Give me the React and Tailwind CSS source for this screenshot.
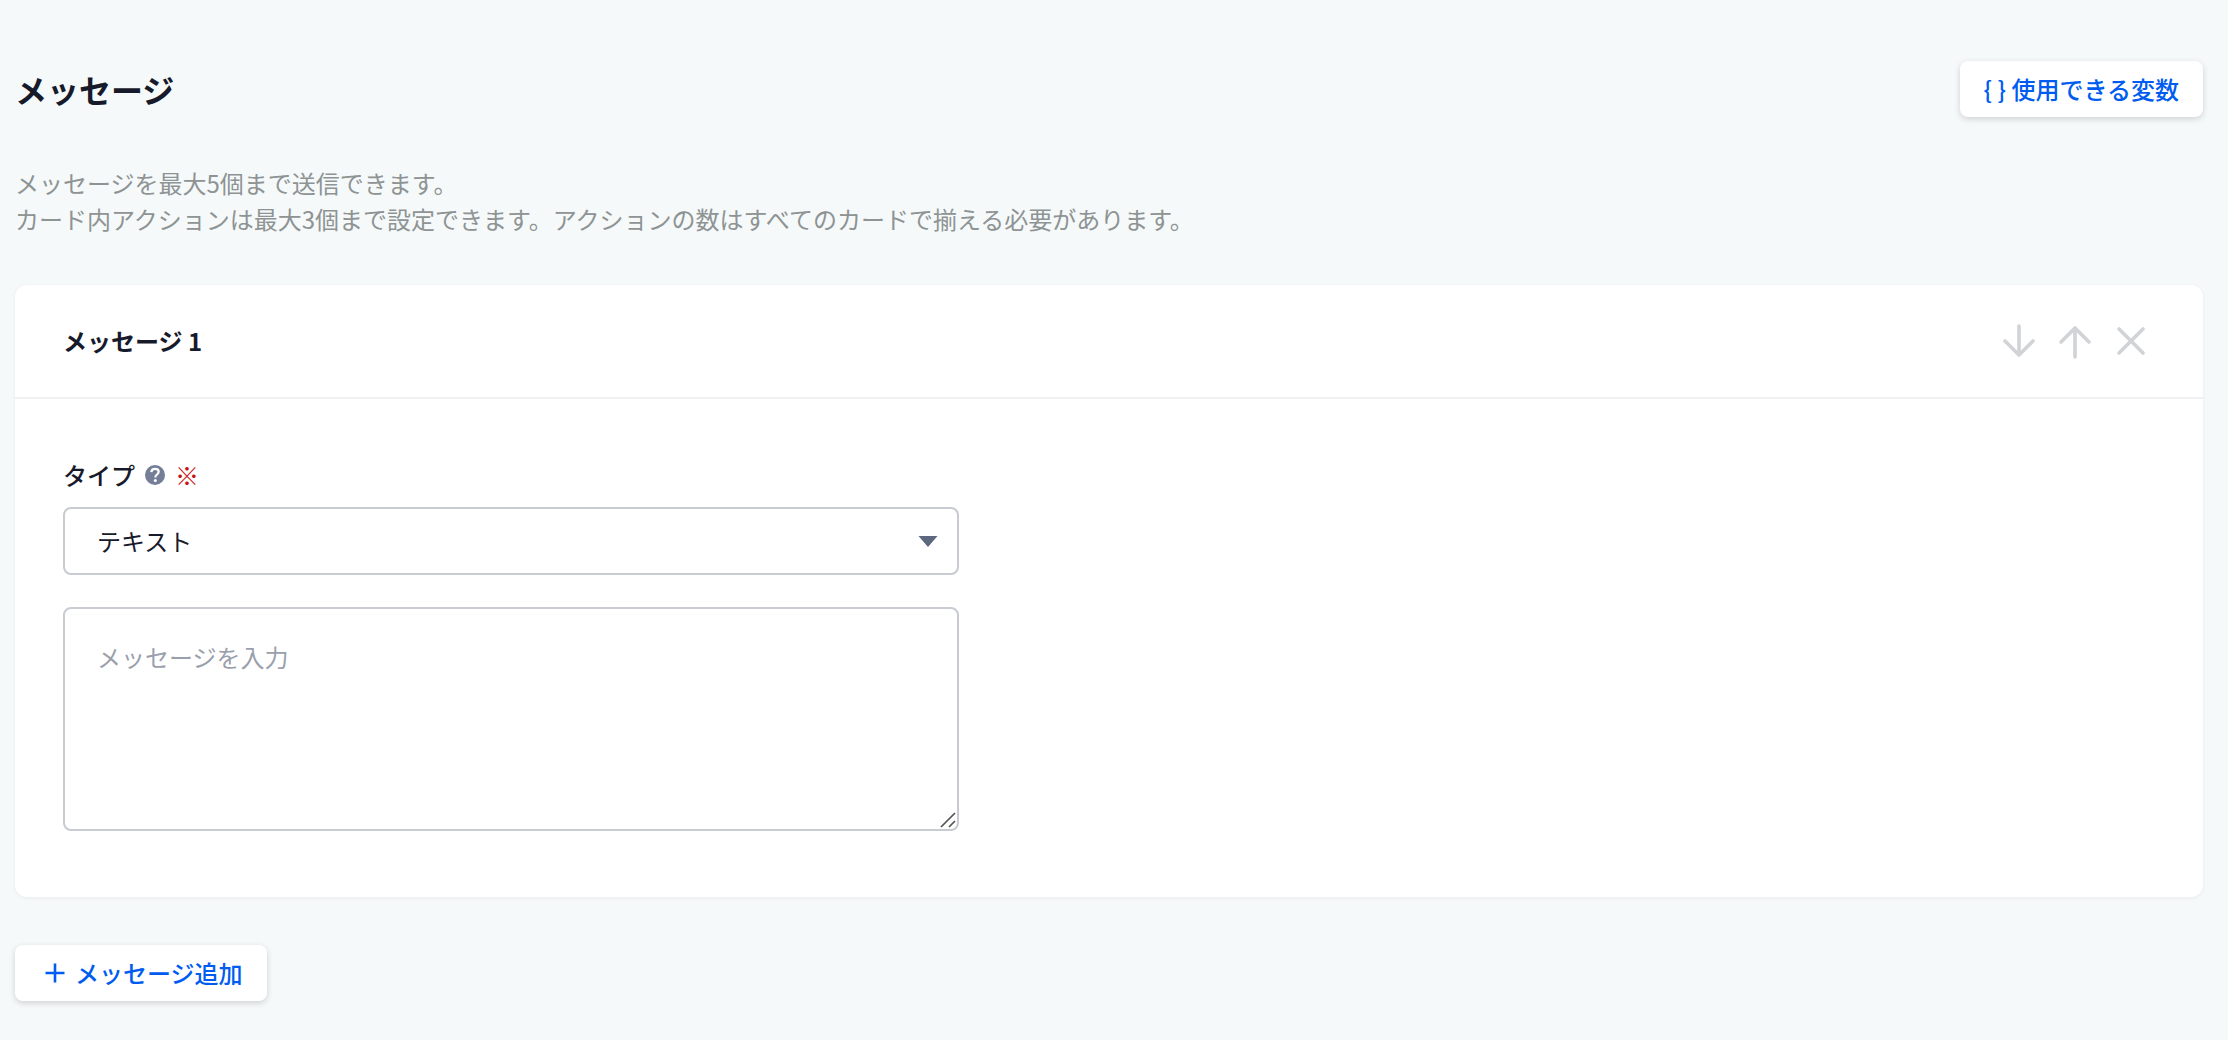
import React, { useState } from "react";

const iconPaths = {
  down: "M16 1v29M2 16l14 14 14-14",
  up: "M16 32V3M2 17L16 3l14 14",
  close: "M4 4l24 24M28 4L4 28",
};

function IconButton({ label, path }) {
  return (
    <button
      type="button"
      aria-label={label}
      className="p-1 text-[#d1d3d6] hover:text-gray-400 transition"
    >
      <svg
        viewBox="0 0 32 32"
        className="size-8 overflow-visible"
        fill="none"
        stroke="currentColor"
        strokeWidth="3.6"
        strokeLinecap="round"
        strokeLinejoin="round"
      >
        <path d={path} />
      </svg>
    </button>
  );
}

function App() {
  const [type, setType] = useState("text");
  const [message, setMessage] = useState("");

  return (
    <div className="min-h-screen bg-[#f5f9fa] pt-[61px] pr-[25px] pb-[39px] pl-[15px] font-['Noto_Sans_CJK_JP',sans-serif] text-2xl leading-9 text-[#171a2b]">
      {/* Header */}
      <div className="flex items-center justify-between">
        <h1 className="text-[32px] leading-12 font-bold">メッセージ</h1>
        <button
          type="button"
          className="h-14 px-6 bg-white rounded-lg shadow-[0_2px_6px_rgba(0,0,0,0.16)] font-medium text-[#005cf0]"
        >
          {"{ } 使用できる変数"}
        </button>
      </div>

      <p className="mt-12 text-[#8e9393]">
        メッセージを最大5個まで送信できます。
        <br />
        カード内アクションは最大3個まで設定できます。アクションの数はすべてのカードで揃える必要があります。
      </p>

      {/* Message card */}
      <section className="mt-12 bg-white rounded-xl shadow-[0_1px_4px_rgba(0,0,0,0.06)]">
        <div className="flex items-center justify-between pl-12 pr-[52px] py-9 border-b-2 border-[#f0f1f3]">
          <h2 className="font-bold">メッセージ 1</h2>
          <div className="flex items-center gap-4">
            <IconButton label="下へ移動" path={iconPaths.down} />
            <IconButton label="上へ移動" path={iconPaths.up} />
            <IconButton label="削除" path={iconPaths.close} />
          </div>
        </div>

        <div className="px-12 pt-[58px] pb-[66px]">
          <div className="flex items-center mb-3.5">
            <label htmlFor="type" className="font-medium">
              タイプ
            </label>
            <svg viewBox="0 0 20 20" className="ml-2.5 size-5" fill="none">
              <circle cx="10" cy="10" r="10" fill="#747e96" />
              <path
                d="M6.3 7.2C6.5 5 8 3.8 10.1 3.8c2.1 0 3.6 1.2 3.6 3 0 2.7-3.4 2.7-3.4 5.6"
                stroke="#fff"
                strokeWidth="2.2"
              />
              <circle cx="10.3" cy="15.6" r="1.5" fill="#fff" />
            </svg>
            <span className="ml-2.5 text-[#c81414]">※</span>
          </div>

          <div className="relative max-w-4xl">
            <select
              id="type"
              value={type}
              onChange={(e) => setType(e.target.value)}
              className="block w-full h-17 px-8 appearance-none bg-white border-2 border-[#c9cbd3] rounded-lg"
            >
              <option value="text">テキスト</option>
            </select>
            <svg
              viewBox="0 0 20 11"
              className="absolute right-[21px] top-[29px] w-5 h-[11px] pointer-events-none"
            >
              <path d="M0.5 0h19L10 11z" fill="#5d6780" />
            </svg>
          </div>

          <div className="relative max-w-4xl mt-8">
            <textarea
              aria-label="メッセージ"
              value={message}
              onChange={(e) => setMessage(e.target.value)}
              placeholder="メッセージを入力"
              className="block w-full h-56 px-8 py-[30px] resize-none bg-white border-2 border-[#c9cbd3] rounded-lg placeholder:text-[#9a9fac]"
            />
            <svg
              viewBox="0 0 16 16"
              className="absolute right-[3px] bottom-[3px] size-4 pointer-events-none"
              fill="none"
              stroke="#555"
              strokeWidth="1.7"
            >
              <path d="M1 15L15 1M9 15l6-6" />
            </svg>
          </div>
        </div>
      </section>

      <button
        type="button"
        className="flex items-center gap-2.5 mt-12 h-14 pl-[30px] pr-6 bg-white rounded-lg shadow-[0_2px_6px_rgba(0,0,0,0.16)] font-medium text-[#005cf0]"
      >
        <svg
          viewBox="0 0 20 20"
          className="size-5"
          fill="none"
          stroke="currentColor"
          strokeWidth="2.6"
        >
          <path d="M10 0.5v19M0.5 10h19" />
        </svg>
        メッセージ追加
      </button>
    </div>
  );
}

export default App;
